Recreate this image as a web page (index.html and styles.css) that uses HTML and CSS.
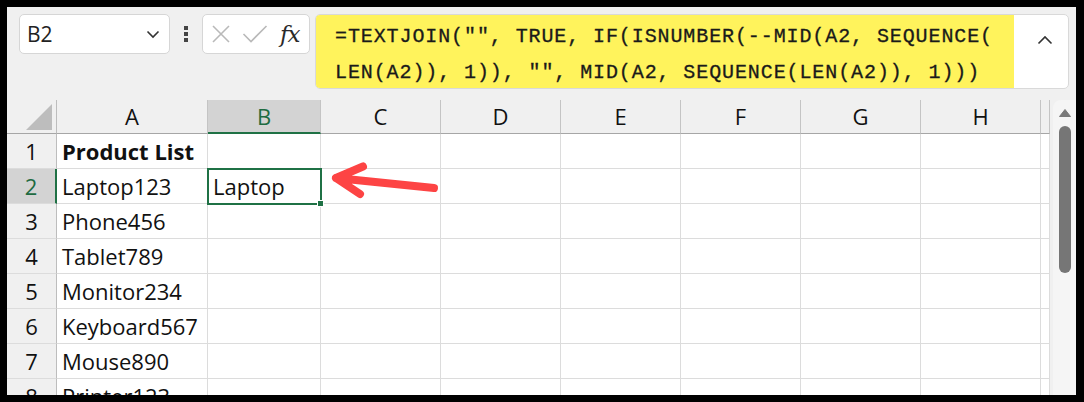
FILE: index.html
```html
<!DOCTYPE html>
<html lang="en">
<head>
<meta charset="utf-8">
<title>Workbook</title>
<link rel="stylesheet" href="styles.css">
</head>
<body>
<div class="frame">
  <div class="app">
    <div class="toolbar">
      <div class="namebox">
        <span class="ref">B2</span>
        <svg class="chev" width="14" height="9" viewBox="0 0 14 9"><path d="M1.5 1.5 L7 7 L12.5 1.5" fill="none" stroke="#333" stroke-width="1.6"/></svg>
      </div>
      <div class="grip">
        <svg width="4" height="18" viewBox="0 0 4 18"><rect x="0" y="1" width="4" height="4" fill="#444"/><rect x="0" y="7" width="4" height="4" fill="#444"/><rect x="0" y="13" width="4" height="4" fill="#444"/></svg>
      </div>
      <div class="fnbox">
        <svg width="20" height="20" viewBox="0 0 20 20"><path d="M2 2 L18 18 M18 2 L2 18" stroke="#b9b9b9" stroke-width="1.6" fill="none"/></svg>
        <svg width="26" height="20" viewBox="0 0 26 20"><path d="M1.5 10 L9 17.5 L24.5 2" stroke="#b9b9b9" stroke-width="1.6" fill="none"/></svg>
        <span class="fx">fx</span>
      </div>
      <div class="formula">
        <div class="hl">=TEXTJOIN("", TRUE, IF(ISNUMBER(--MID(A2, SEQUENCE(<br>LEN(A2)), 1)), "", MID(A2, SEQUENCE(LEN(A2)), 1)))</div>
        <svg class="collapse" width="16" height="10" viewBox="0 0 16 10"><path d="M1.5 8.5 L8 2 L14.5 8.5" fill="none" stroke="#333" stroke-width="1.6"/></svg>
      </div>
    </div>

    <div class="sheet">
      <div class="grid">
        <div class="corner"><svg width="26" height="26" viewBox="0 0 26 26"><path d="M26 0 L26 26 L0 26 Z" fill="#bdbdbd"/></svg></div>
        <div class="ch">A</div><div class="ch sel">B</div><div class="ch">C</div><div class="ch">D</div><div class="ch">E</div><div class="ch">F</div><div class="ch">G</div><div class="ch">H</div><div class="ch"></div>

        <div class="rh">1</div><div class="c bold">Product List</div><div class="c"></div><div class="c"></div><div class="c"></div><div class="c"></div><div class="c"></div><div class="c"></div><div class="c"></div><div class="c"></div>
        <div class="rh sel">2</div><div class="c">Laptop123</div><div class="c active">Laptop</div><div class="c"></div><div class="c"></div><div class="c"></div><div class="c"></div><div class="c"></div><div class="c"></div><div class="c"></div>
        <div class="rh">3</div><div class="c">Phone456</div><div class="c"></div><div class="c"></div><div class="c"></div><div class="c"></div><div class="c"></div><div class="c"></div><div class="c"></div><div class="c"></div>
        <div class="rh">4</div><div class="c">Tablet789</div><div class="c"></div><div class="c"></div><div class="c"></div><div class="c"></div><div class="c"></div><div class="c"></div><div class="c"></div><div class="c"></div>
        <div class="rh">5</div><div class="c">Monitor234</div><div class="c"></div><div class="c"></div><div class="c"></div><div class="c"></div><div class="c"></div><div class="c"></div><div class="c"></div><div class="c"></div>
        <div class="rh">6</div><div class="c">Keyboard567</div><div class="c"></div><div class="c"></div><div class="c"></div><div class="c"></div><div class="c"></div><div class="c"></div><div class="c"></div><div class="c"></div>
        <div class="rh">7</div><div class="c">Mouse890</div><div class="c"></div><div class="c"></div><div class="c"></div><div class="c"></div><div class="c"></div><div class="c"></div><div class="c"></div><div class="c"></div>
        <div class="rh">8</div><div class="c">Printer123</div><div class="c"></div><div class="c"></div><div class="c"></div><div class="c"></div><div class="c"></div><div class="c"></div><div class="c"></div><div class="c"></div>
      </div>
      <div class="vscroll">
        <svg class="up" width="12" height="8" viewBox="0 0 12 8"><path d="M6 0.5 L11.5 7.5 L0.5 7.5 Z" fill="#7a7a7a" stroke="#7a7a7a" stroke-linejoin="round"/></svg>
        <div class="thumb"></div>
      </div>
      <svg class="callout" width="120" height="40" viewBox="0 0 120 40">
        <path d="M10 13 L108 23 M10 13 L37 1.5 M10 13 L34 29" fill="none" stroke="#fd4444" stroke-width="8" stroke-linecap="round" stroke-linejoin="round"/>
      </svg>
    </div>
  </div>
</div>
</body>
</html>
```

FILE: styles.css
```css
html, body {
  margin: 0;
  padding: 0;
  background: #000;
}

.frame {
  width: 1084px;
  height: 402px;
  box-sizing: border-box;
  padding: 7px 8px 7px 7px;
  background: #000;
}

.app {
  height: 100%;
  background: #f0f0f0;
  display: flex;
  flex-direction: column;
  overflow: hidden;
  font-family: "Open Sans", "Noto Sans", sans-serif;
  color: #111;
}

/* ---------- formula bar ---------- */
.toolbar {
  display: flex;
  align-items: flex-start;
  padding: 7px 0 0 12px;
  height: 93px;
  box-sizing: border-box;
  flex: none;
}

.namebox {
  width: 151px;
  height: 40px;
  box-sizing: border-box;
  background: #fff;
  border: 1px solid #d6d6d6;
  border-radius: 5px;
  display: flex;
  align-items: center;
  justify-content: space-between;
  padding: 0 9px 0 7px;
}

.ref {
  font-size: 21px;
  color: #222;
}

.grip {
  width: 32px;
  height: 40px;
  display: flex;
  align-items: center;
  justify-content: center;
}

.fnbox {
  width: 108px;
  height: 40px;
  box-sizing: border-box;
  background: #fff;
  border: 1px solid #d6d6d6;
  border-radius: 5px;
  display: flex;
  align-items: center;
  gap: 11px;
  padding: 0 0 0 8px;
}

.fx {
  font-family: "DejaVu Serif", "Liberation Serif", serif;
  font-style: italic;
  font-size: 23px;
  color: #2a2a2a;
  letter-spacing: -1px;
  margin-left: 1px;
}

.formula {
  margin-left: 5px;
  width: 754px;
  height: 75px;
  box-sizing: border-box;
  background: #fff;
  border: 1px solid #d9d9d9;
  border-radius: 5px;
  display: flex;
  align-items: flex-start;
  justify-content: space-between;
  overflow: hidden;
}

.hl {
  width: 698px;
  height: 73px;
  box-sizing: border-box;
  background: #fff35c;
  padding: 4px 0 0 19px;
  font-family: "Liberation Mono", "DejaVu Sans Mono", monospace;
  font-size: 20px;
  letter-spacing: 0.9px;
  line-height: 36px;
  color: #1a1a1a;
  -webkit-text-stroke: 0.3px #1a1a1a;
  white-space: nowrap;
}

.collapse {
  margin: 20px 15px 0 0;
}

/* ---------- sheet ---------- */
.sheet {
  position: relative;
  display: flex;
  flex: 1;
  min-height: 0;
}

.grid {
  display: grid;
  grid-template-columns: 50px 151px 113px repeat(6, 120px) 9px;
  grid-template-rows: 34px repeat(8, 35px);
  background: #fff;
  align-content: start;
}

.grid > div {
  box-sizing: border-box;
  border-right: 1px solid #dcdcdc;
  border-bottom: 1px solid #dcdcdc;
}

.corner {
  background: #f0f0f0;
  display: flex;
  align-items: flex-end;
  justify-content: flex-end;
  padding: 0 4px 3px 0;
  border-right-color: #bdbdbd !important;
  border-bottom-color: #a6a6a6 !important;
}

.ch {
  background: #f0f0f0;
  border-right-color: #c4c4c4 !important;
  border-bottom-color: #a6a6a6 !important;
  text-align: center;
  font-size: 22px;
  line-height: 33px;
  color: #111;
}

.ch.sel {
  background: #d3d3d3;
  color: #1e6b41;
  border-bottom: 2px solid #1f7145 !important;
}

.rh {
  background: #f0f0f0;
  border-right-color: #bdbdbd !important;
  text-align: center;
  font-size: 22px;
  line-height: 34px;
  color: #111;
}

.rh.sel {
  background: #d3d3d3;
  color: #1e6b41;
  border-right: 2px solid #1f7145 !important;
}

.c {
  font-size: 22px;
  line-height: 35px;
  padding-left: 5px;
  white-space: nowrap;
  overflow: visible;
}

.bold {
  font-weight: 700;
}

.active {
  position: relative;
  outline: 2px solid #1f7145;
  outline-offset: -1px;
}

.active::after {
  content: "";
  position: absolute;
  right: -4px;
  bottom: -4px;
  width: 7px;
  height: 7px;
  background: #1f7145;
  border: 1px solid #fff;
  box-sizing: border-box;
}

.vscroll {
  margin-left: 3px;
  width: 23px;
  background: #f5f5f5;
  border-radius: 8px 0 0 0;
  display: flex;
  flex-direction: column;
  align-items: center;
  padding-top: 9px;
  box-sizing: border-box;
}

.thumb {
  margin-top: 9px;
  width: 12px;
  height: 147px;
  border-radius: 6px;
  background: #767676;
}

.callout {
  position: absolute;
  left: 319px;
  top: 65px;
  overflow: visible;
}
```
